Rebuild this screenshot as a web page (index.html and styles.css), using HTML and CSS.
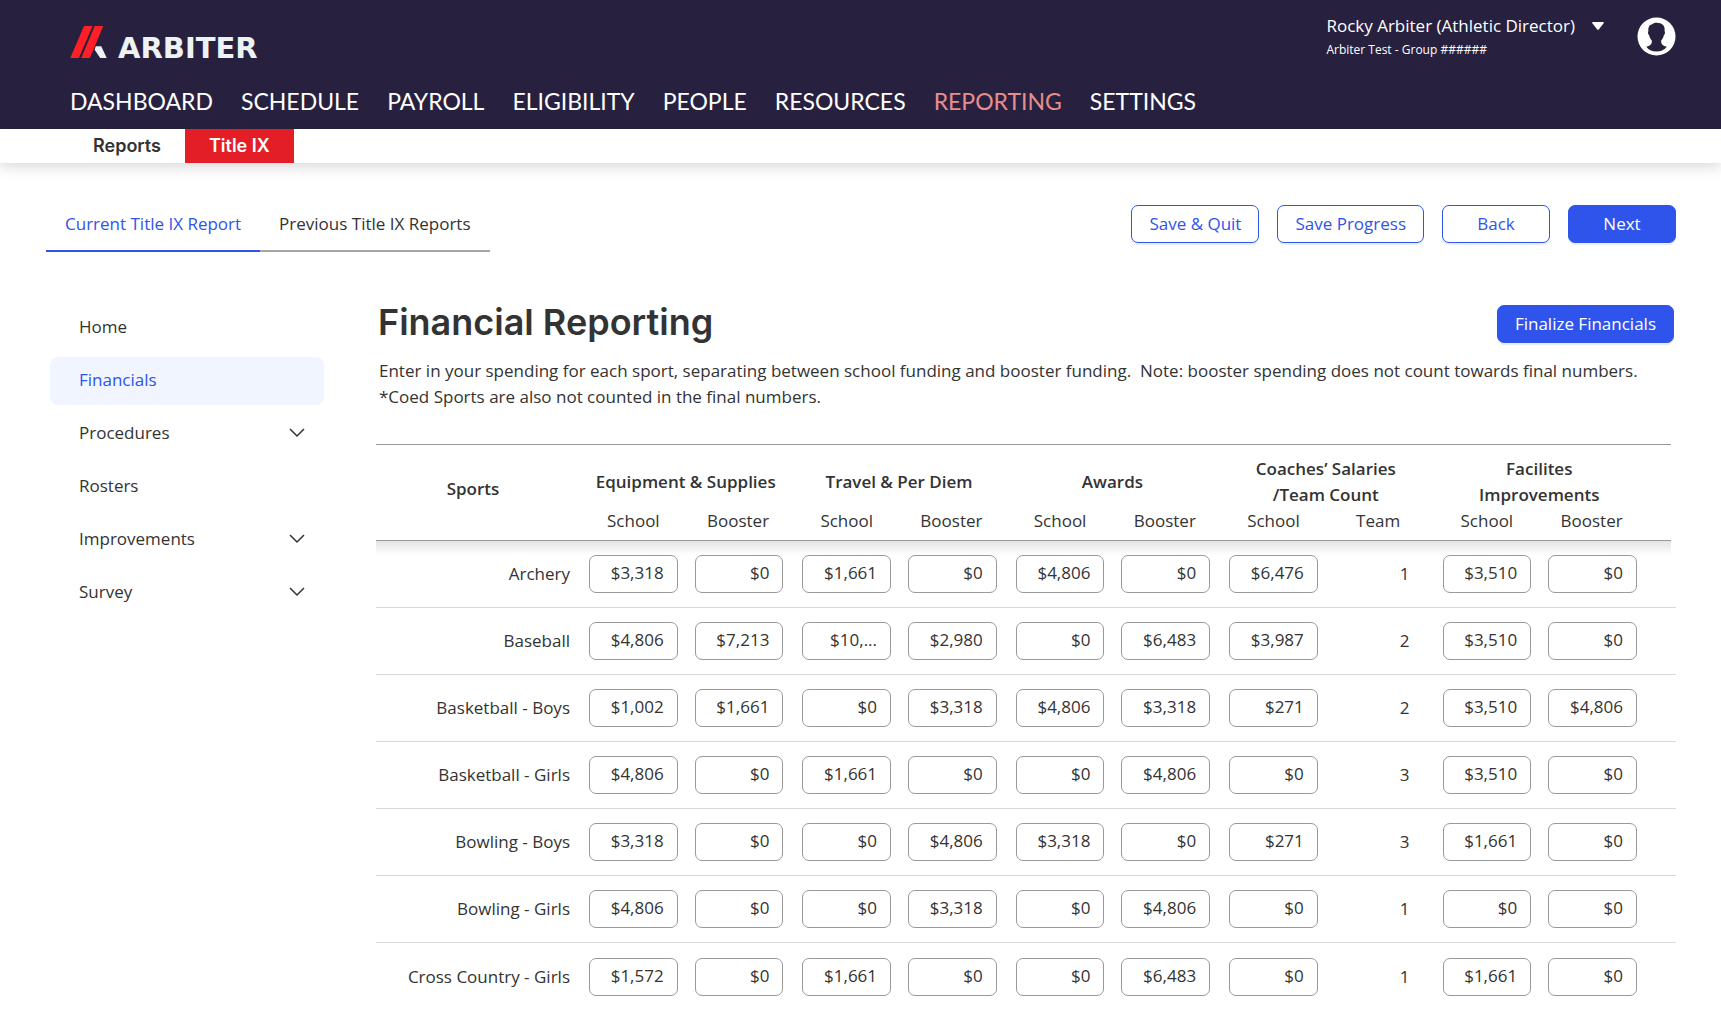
FILE: index.html
```html
<!DOCTYPE html>
<html lang="en">
<head>
    <meta charset="UTF-8">
    <meta name="viewport" content="width=device-width, initial-scale=1.0">
    <title>Arbiter - Title IX Financial Reporting</title>
    <link rel="stylesheet" href="styles.css">
</head>
<body>
    <header class="header">
        <div class="header-top">
            <a href="#" class="logo">
                <svg class="logo-mark" viewBox="0 0 106 93" aria-hidden="true">
                    <path fill="#ff1f26" d="M40 0h25L25 93H0zM71 0h25L57 93H32z"/>
                    <path fill="#edf2f5" d="M74 59h16l16 34H87L71 69z"/>
                </svg>
                <span class="logo-text">ARBITER</span>
            </a>
            <div class="user">
                <div class="user-info">
                    <button type="button" class="user-name">
                        Rocky Arbiter (Athletic Director)
                        <svg class="caret" viewBox="0 0 12 8" aria-hidden="true"><path fill="#fff" d="M1 0h10q1.500 0 .6 1.200L7 7.300q-1 1-2 0L.4 1.200Q-.5 0 1 0z"/></svg>
                    </button>
                    <div class="user-group">Arbiter Test - Group ######</div>
                </div>
                <svg class="avatar" viewBox="0 0 40 40" aria-hidden="true">
                    <circle cx="20" cy="20" r="19.500" fill="#fff"/>
                    <path fill="#27213f" d="M20 6c-2 0-3 .6-4 1.200-3.500.8-4.700 3.500-4.300 7.300-.9.600-.3 3.500.8 4.200.5 2.500 1.500 4 2.700 5.300.3 3-.7 5-5.700 6.500C12 34 16 35.500 20 35.500s8-1.500 10.500-5c-5-1.500-6-3.500-5.700-6.500 1.200-1.300 2.200-2.800 2.700-5.300 1.100-.7 1.700-3.600.8-4.200C29 9 26 6 20 6z"/>
                </svg>
            </div>
        </div>
        <nav class="main-nav">
            <a href="#">DASHBOARD</a>
            <a href="#">SCHEDULE</a>
            <a href="#">PAYROLL</a>
            <a href="#">ELIGIBILITY</a>
            <a href="#">PEOPLE</a>
            <a href="#">RESOURCES</a>
            <a href="#" class="active">REPORTING</a>
            <a href="#">SETTINGS</a>
        </nav>
    </header>

    <nav class="sub-nav">
        <a href="#">Reports</a>
        <a href="#" class="active">Title IX</a>
    </nav>

    <div class="page">
        <div class="toolbar">
            <nav class="tabs">
                <a href="#" class="active">Current Title IX Report</a>
                <a href="#">Previous Title IX Reports</a>
            </nav>
            <div class="actions">
                <button type="button" class="btn">Save &amp; Quit</button>
                <button type="button" class="btn">Save Progress</button>
                <button type="button" class="btn btn-step">Back</button>
                <button type="button" class="btn btn-step btn-primary">Next</button>
            </div>
        </div>

        <div class="content">
            <nav class="sidebar">
                <a href="#">Home</a>
                <a href="#" class="active">Financials</a>
                <a href="#">Procedures <svg class="chevron" viewBox="0 0 16 10" aria-hidden="true"><path d="M1 1l7 7 7-7"/></svg></a>
                <a href="#">Rosters</a>
                <a href="#">Improvements <svg class="chevron" viewBox="0 0 16 10" aria-hidden="true"><path d="M1 1l7 7 7-7"/></svg></a>
                <a href="#">Survey <svg class="chevron" viewBox="0 0 16 10" aria-hidden="true"><path d="M1 1l7 7 7-7"/></svg></a>
            </nav>

            <main class="main">
                <div class="main-header">
                    <h1>Financial Reporting</h1>
                    <button type="button" class="btn btn-primary">Finalize Financials</button>
                </div>
                <p class="description">
                    Enter in your spending for each sport, separating between school funding and booster funding.&nbsp; Note: booster spending does not count towards final numbers.<br>
                    *Coed Sports are also not counted in the final numbers.
                </p>

                <table class="finance-table">
                    <colgroup>
                        <col class="col-sport">
                        <col span="10">
                        <col class="col-space">
                        <col class="col-edge">
                    </colgroup>
                    <thead>
                        <tr class="groups">
                            <th rowspan="2" class="sports-head">Sports</th>
                            <th colspan="2">Equipment &amp; Supplies</th>
                            <th colspan="2">Travel &amp; Per Diem</th>
                            <th colspan="2">Awards</th>
                            <th colspan="2">Coaches’ Salaries<br>/Team Count</th>
                            <th colspan="2">Facilites<br>Improvements</th>
                            <td></td>
                        </tr>
                        <tr class="sources">
                            <th>School</th>
                            <th>Booster</th>
                            <th>School</th>
                            <th>Booster</th>
                            <th>School</th>
                            <th>Booster</th>
                            <th>School</th>
                            <th>Team</th>
                            <th>School</th>
                            <th>Booster</th>
                            <td></td>
                        </tr>
                    </thead>
                    <tbody id="financeBody">
                        <!-- rows are filled in by script.js -->
                    </tbody>
                </table>
            </main>
        </div>
    </div>

    <script src="script.js"></script>
</body>
</html>
```

FILE: styles.css
```css
* {
    margin: 0;
    padding: 0;
    box-sizing: border-box;
}

body {
    font-family: 'Open Sans', 'Noto Sans', sans-serif;
    font-size: 17px;
    line-height: 26px;
    color: #333;
    background: #fff;
}

a {
    color: inherit;
    text-decoration: none;
}

button, input {
    font: inherit;
    color: inherit;
}

/* Header */
.header {
    background: #27213f;
    color: #fff;
    padding: 13px 45px 13px 70px;
}

.header-top {
    display: flex;
    justify-content: space-between;
    height: 58px;
}

.logo {
    display: flex;
    align-items: flex-end;
    gap: 11px;
    height: 45px;
}

.logo-mark {
    width: 37px;
    height: 32px;
}

.logo-text {
    font-family: 'DejaVu Sans', sans-serif;
    font-size: 29px;
    font-weight: bold;
    line-height: 32px;
    height: 26px;
    color: #edf2f5;
}

.user {
    display: flex;
    align-items: flex-start;
    gap: 33px;
}

.user-name {
    display: flex;
    align-items: center;
    gap: 17px;
    background: none;
    border: none;
    cursor: pointer;
}

.caret {
    width: 12px;
    height: 8px;
}

.user-group {
    font-size: 12px;
    line-height: 22px;
}

.avatar {
    width: 39px;
    height: 39px;
    margin-top: 4px;
}

.main-nav {
    display: flex;
    gap: 28px;
    margin-top: 15px;
    font-family: Lato, sans-serif;
    font-size: 23px;
    line-height: 30px;
}

.main-nav .active {
    color: #e88d8d;
}

.sub-nav {
    display: flex;
    padding-left: 69px;
    font-family: Inter, sans-serif;
    font-size: 18px;
    font-weight: 600;
    line-height: 34px;
    box-shadow: 0 4px 14px rgba(0, 0, 0, 0.15);
}

.sub-nav a {
    padding: 0 24px;
}

.sub-nav .active {
    background: #e41e26;
    color: #fff;
}

/* Toolbar */
.page {
    padding: 36px 45px 0 46px;
}

.toolbar {
    display: flex;
    justify-content: space-between;
    align-items: center;
}

.tabs {
    display: flex;
}

.tabs a {
    padding: 12px 19px 13px;
    border-bottom: 2px solid #a6a6a6;
}

.tabs .active {
    color: #2f54eb;
    border-color: #2f54eb;
}

.actions {
    display: flex;
    gap: 18px;
    padding-bottom: 3px;
}

.btn {
    height: 38px;
    padding: 0 17px;
    background: #fff;
    color: #2f54eb;
    border: 1px solid #2f54eb;
    border-radius: 7px;
    box-shadow: 0 2px 0 #e6efff;
    cursor: pointer;
}

.btn-step {
    width: 108px;
}

.btn-primary {
    background: #2f54eb;
    color: #fff;
}

/* Content */
.content {
    display: flex;
    gap: 52px;
    margin-top: 52px;
}

.sidebar {
    display: flex;
    flex-direction: column;
    gap: 5px;
    width: 274px;
    margin-left: 4px;
    flex-shrink: 0;
}

.sidebar a {
    display: flex;
    justify-content: space-between;
    align-items: center;
    height: 48px;
    padding: 0 19px 2px 29px;
    border-radius: 8px;
}

.sidebar .active {
    background: #f0f5ff;
    color: #2f54eb;
}

.chevron {
    width: 16px;
    height: 10px;
    fill: none;
    stroke: #333;
    stroke-width: 1.5;
}

.main {
    flex: 1;
    min-width: 0;
}

.main-header {
    display: flex;
    justify-content: space-between;
    align-items: center;
    padding: 0 2px;
}

.main-header h1 {
    padding-bottom: 4px;
    font-family: Inter, sans-serif;
    font-size: 36px;
    font-weight: 600;
    line-height: 36px;
}

.description {
    margin: 14px 0 34px;
    padding-left: 3px;
}

/* Table */
.finance-table {
    width: 100%;
    table-layout: fixed;
    border-collapse: separate;
    border-spacing: 0;
}

.col-sport {
    width: 204px;
}

.col-space {
    width: 24px;
}

.col-edge {
    width: 5px;
}

.groups th,
.groups td {
    height: 64px;
    padding: 11px 2px 0 0;
    border-top: 1px solid #999;
    font-weight: 600;
}

.sources th,
.sources td {
    height: 33px;
    padding-bottom: 6px;
    border-bottom: 1px solid #999;
    font-weight: normal;
}

.sources th:nth-child(even) {
    padding-right: 4px;
}

.groups .sports-head {
    padding: 0 10px 8px 0;
    border-bottom: 1px solid #999;
}

.finance-table tbody th,
.finance-table tbody td {
    height: 67px;
    padding: 0 9px;
    border-bottom: 1px solid #d9d9d9;
    font-weight: normal;
    text-align: right;
}

.finance-table tbody th {
    padding-right: 10px;
}

/* booster columns sit a little closer to their school column */
.finance-table tbody td:nth-child(odd) {
    padding: 0 10px 0 8px;
}

.finance-table tbody td.space {
    padding: 0;
}

.finance-table tbody td.team:nth-child(odd) {
    padding-right: 24px;
}

/* shadow under the table head */
.finance-table tbody tr:first-child > :not(:last-child) {
    background: linear-gradient(#e4e4e4, #fff 14px);
}

.finance-table tbody tr:last-child > * {
    border-bottom: none;
}

.finance-table input {
    display: block;
    width: 100%;
    height: 38px;
    padding: 0 13px 3px 8px;
    background: #fff;
    border: 1px solid #999;
    border-radius: 7px;
    text-align: right;
}
```

FILE: script.js
```js
// Spending per sport. The eighth value is the team count, the rest are editable.
const columns = [
    'Equipment, school', 'Equipment, booster',
    'Travel, school', 'Travel, booster',
    'Awards, school', 'Awards, booster',
    'Salaries, school', 'Team count',
    'Facilities, school', 'Facilities, booster'
];

const sports = [
    ['Archery', '$3,318', '$0', '$1,661', '$0', '$4,806', '$0', '$6,476', '1', '$3,510', '$0'],
    ['Baseball', '$4,806', '$7,213', '$10,...', '$2,980', '$0', '$6,483', '$3,987', '2', '$3,510', '$0'],
    ['Basketball - Boys', '$1,002', '$1,661', '$0', '$3,318', '$4,806', '$3,318', '$271', '2', '$3,510', '$4,806'],
    ['Basketball - Girls', '$4,806', '$0', '$1,661', '$0', '$0', '$4,806', '$0', '3', '$3,510', '$0'],
    ['Bowling - Boys', '$3,318', '$0', '$0', '$4,806', '$3,318', '$0', '$271', '3', '$1,661', '$0'],
    ['Bowling - Girls', '$4,806', '$0', '$0', '$3,318', '$0', '$4,806', '$0', '1', '$0', '$0'],
    ['Cross Country - Girls', '$1,572', '$0', '$1,661', '$0', '$0', '$6,483', '$0', '1', '$1,661', '$0']
];

const teamColumn = 7;

document.getElementById('financeBody').innerHTML = sports.map(([name, ...values]) => {
    const cells = values.map((value, i) => {
        if (i === teamColumn) {
            return `<td class="team">${value}</td>`;
        }
        return `<td><input type="text" value="${value}" aria-label="${name}: ${columns[i]}"></td>`;
    });
    return `<tr><th scope="row">${name}</th>${cells.join('')}<td class="space"></td><td class="space"></td></tr>`;
}).join('');
```
